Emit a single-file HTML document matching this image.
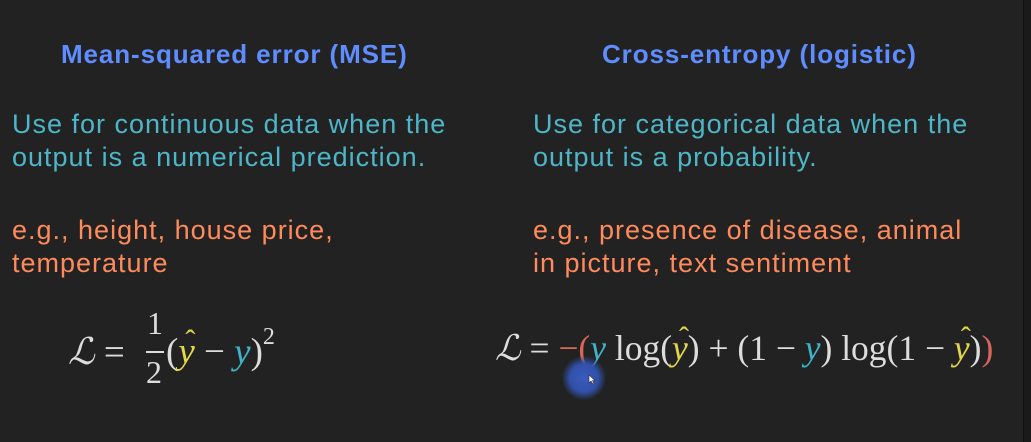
<!DOCTYPE html>
<html><head><meta charset="utf-8"><style>
body{margin:0;width:1031px;height:442px;background:#222222;position:relative;overflow:hidden;font-family:"Liberation Sans",sans-serif}
.r{position:absolute;left:1023px;top:0;width:8px;height:442px;background:#1a1a1a;border-left:1px solid #111}
.t{position:absolute;white-space:nowrap}
.h{color:#5f8dff;font-weight:bold;font-size:26px;letter-spacing:0.9px}
.c{color:#4db6c8;font-size:27px;line-height:33px;letter-spacing:1px}
.o{color:#ff8a5b;font-size:27px;line-height:33px;letter-spacing:1px}
.m{font-family:"Liberation Serif",serif;color:#dddddd;font-size:37px}
.i{font-style:italic}
.y{color:#e3d64a}.b{color:#3fb4c8}.rd{color:#d9665c}
.hat{position:relative;display:inline-block}
.hat::before{content:"ˆ";position:absolute;left:7px;top:-6px;font-size:30px;font-style:normal}
.cur{position:absolute;left:562px;top:356px;width:44px;height:44px;border-radius:50%;background:radial-gradient(circle,#3b5bc0 0%,#3150a8 45%,rgba(40,60,140,0) 72%)}
</style></head><body>
<div class="r"></div>
<div class="t h" style="left:61px;top:39px">Mean-squared error (MSE)</div>
<div class="t h" style="left:602px;top:39px">Cross-entropy (logistic)</div>
<div class="t c" style="left:12px;top:108px">Use for continuous data when the<br>output is a numerical prediction.</div>
<div class="t c" style="left:533px;top:108px">Use for categorical data when the<br>output is a probability.</div>
<div class="t o" style="left:12px;top:214px">e.g., height, house price,<br>temperature</div>
<div class="t o" style="left:533px;top:214px">e.g., presence of disease, animal<br>in picture, text sentiment</div>
<div class="t m" style="left:68px;top:330px"><span class="i">ℒ</span> =</div>
<div class="t m" style="left:147px;top:305px;font-size:32px">1</div>
<div style="position:absolute;left:146px;top:351px;width:18px;height:2px;background:#ddd"></div>
<div class="t m" style="left:146px;top:354px;font-size:32px">2</div>
<div class="t m" style="left:166px;top:330px">(<span class="i y hat">y</span> − <span class="i b">y</span>)<sup style="font-size:24px;position:relative;top:-6px">2</sup></div>
<div class="t m" style="left:495px;top:327px;font-size:35.5px"><span class="i">ℒ</span> = <span class="rd">−(</span><span class="i b">y</span> log(<span class="i y hat">y</span>) + (1 − <span class="i b">y</span>) log(1 − <span class="i y hat">y</span>)<span class="rd">)</span></div>
<div class="cur"></div>
<svg style="position:absolute;left:588px;top:374px" width="8" height="11" viewBox="0 0 8 11"><path d="M1 1 L1 9 L3 7 L5 10 L6 9.5 L4.5 6.5 L7 6.5 Z" fill="#fff" stroke="#333" stroke-width="0.6"/></svg>
</body></html>
